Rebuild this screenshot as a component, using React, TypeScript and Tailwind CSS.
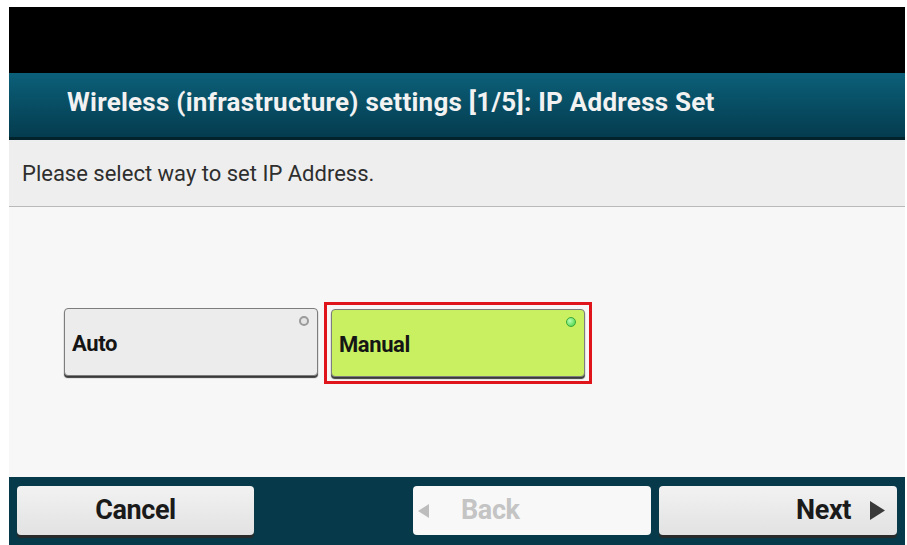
import React from "react";

function SelectButton({
  label,
  selected,
}: {
  label: string;
  selected?: boolean;
}) {
  return (
    <div
      className={
        "relative flex h-[68px] w-[254px] items-center rounded-[4px] border border-[#7d7d7d] pl-[7px] pt-[2px] shadow-[0_2px_1px_#3a3a3a] " +
        (selected ? "bg-[#c8f060]" : "bg-[#ececec]")
      }
    >
      <span className="text-[22px] font-bold tracking-[-0.4px] text-[#151515]">
        {label}
      </span>
      {selected ? (
        <span className="absolute right-[8px] top-[7px] h-[10px] w-[10px] rounded-full border border-[#3aa83a] bg-[radial-gradient(circle_at_35%_35%,#b8ffb0,#3fcf3f)]" />
      ) : (
        <span className="absolute right-[8px] top-[7px] h-[10px] w-[10px] rounded-full border-2 border-[#9a9a9a] bg-[#e4e4e4]" />
      )}
    </div>
  );
}

function FooterButton({
  children,
  className,
}: {
  children: React.ReactNode;
  className?: string;
}) {
  return (
    <div
      className={
        "flex h-[49px] items-center rounded-[4px] text-[27px] font-bold tracking-[-0.4px] " +
        (className ?? "")
      }
    >
      {children}
    </div>
  );
}

export default function App() {
  return (
    <div
      className="h-[545px] w-[907px] overflow-hidden bg-white pl-[9px] pr-[2px] pt-[7px]"
      style={{ fontFamily: "Roboto, 'Liberation Sans', sans-serif" }}
    >
      <div className="flex h-full flex-col">
        <div className="h-[66px] bg-black" />

        <div className="flex h-[67px] items-center border-b-[3px] border-[#02222c] bg-gradient-to-b from-[#0b6079] to-[#053c4f] pb-[6px] pl-[58px]">
          <h1 className="text-[26px] font-bold tracking-[0.25px] text-[#f2f2f2]">
            Wireless (infrastructure) settings [1/5]: IP Address Set
          </h1>
        </div>

        <div className="flex h-[67px] items-center border-b border-[#b9b9b9] bg-[#eeeeee] pl-[13px]">
          <p className="text-[22px] text-[#2e2e2e]">
            Please select way to set IP Address.
          </p>
        </div>

        <div className="flex flex-1 items-start gap-[6px] bg-[#f7f7f7] pl-[55px] pt-[95px]">
          <div className="mt-[6px]">
            <SelectButton label="Auto" />
          </div>
          <div className="border-[3px] border-[#e0151b] bg-[#f7f7f7] p-[4px]">
            <SelectButton label="Manual" selected />
          </div>
        </div>

        <div className="flex h-[68px] items-start gap-[8px] bg-[#063a4a] px-[8px] pt-[9px]">
          <FooterButton className="w-[237px] justify-center bg-gradient-to-b from-[#f2f2f2] to-[#e2e2e2] text-[#1a1a1a] shadow-[0_3px_1px_#2a2a2a]">
            Cancel
          </FooterButton>
          <div className="flex-1" />
          <FooterButton className="w-[238px] bg-[#f8f8f8] pl-[5px] text-[#c4c4c4]">
            <svg width="11" height="14" viewBox="0 0 11 14">
              <polygon points="11,0 11,14 0,7" fill="#bdbdbd" />
            </svg>
            <span className="ml-[32px]">Back</span>
          </FooterButton>
          <FooterButton className="w-[238px] justify-end bg-gradient-to-b from-[#f2f2f2] to-[#e2e2e2] pr-[12px] text-[#1a1a1a] shadow-[0_3px_1px_#2a2a2a]">
            <span>Next</span>
            <svg className="ml-[19px]" width="15" height="19" viewBox="0 0 15 19">
              <polygon points="0,0 15,9.5 0,19" fill="#3a3a3a" />
            </svg>
          </FooterButton>
        </div>
      </div>
    </div>
  );
}
